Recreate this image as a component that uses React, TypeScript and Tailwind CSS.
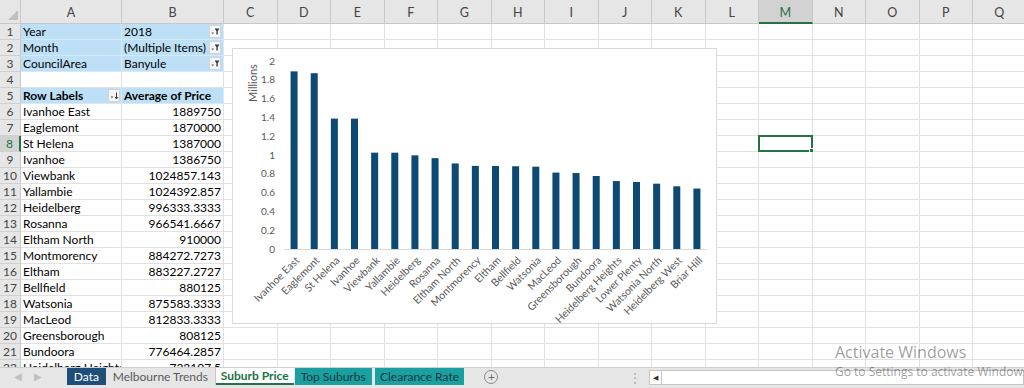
import React from "react";

const letters = ["A", "B", "C", "D", "E", "F", "G", "H", "I", "J", "K", "L", "M", "N", "O", "P", "Q"];

const suburbs: [string, string][] = [
  ["Ivanhoe East", "1889750"],
  ["Eaglemont", "1870000"],
  ["St Helena", "1387000"],
  ["Ivanhoe", "1386750"],
  ["Viewbank", "1024857.143"],
  ["Yallambie", "1024392.857"],
  ["Heidelberg", "996333.3333"],
  ["Rosanna", "966541.6667"],
  ["Eltham North", "910000"],
  ["Montmorency", "884272.7273"],
  ["Eltham", "883227.2727"],
  ["Bellfield", "880125"],
  ["Watsonia", "875583.3333"],
  ["MacLeod", "812833.3333"],
  ["Greensborough", "808125"],
  ["Bundoora", "776464.2857"],
  ["Heidelberg Heights", "723107.5"],
];

const bars: [string, number][] = [
  ["Ivanhoe East", 1.88975],
  ["Eaglemont", 1.87],
  ["St Helena", 1.387],
  ["Ivanhoe", 1.38675],
  ["Viewbank", 1.024857],
  ["Yallambie", 1.024393],
  ["Heidelberg", 0.996333],
  ["Rosanna", 0.966542],
  ["Eltham North", 0.91],
  ["Montmorency", 0.884273],
  ["Eltham", 0.883227],
  ["Bellfield", 0.880125],
  ["Watsonia", 0.875583],
  ["MacLeod", 0.812833],
  ["Greensborough", 0.808125],
  ["Bundoora", 0.776464],
  ["Heidelberg Heights", 0.723],
  ["Lower Plenty", 0.713],
  ["Watsonia North", 0.695],
  ["Heidelberg West", 0.667],
  ["Briar Hill", 0.643],
];

const FilterBtn = () => (
  <span className="absolute right-[2px] top-[1px] flex h-[13px] w-[12px] items-center justify-center border border-[#d3d3d3] bg-[#f6f6f6]">
    <svg width="9" height="7" viewBox="0 0 9 7">
      <path d="M0.5 4.5 L3 4.5 L1.75 6.2Z" fill="#555" />
      <path d="M3.6 0.6 H8.6 L6.8 3 V6.6 H5.4 V3Z" fill="#3c3c3c" />
    </svg>
  </span>
);

const SortBtn = () => (
  <span className="absolute right-[1px] top-[1px] flex h-[13px] w-[12px] items-center justify-center border border-[#d3d3d3] bg-[#f6f6f6]">
    <svg width="9" height="8" viewBox="0 0 9 8">
      <path d="M0.5 4.5 L3.5 4.5 L2 6.3Z" fill="#555" />
      <path d="M6.5 0.5 V6.5 M5 5 L6.5 7 L8 5" stroke="#3c3c3c" strokeWidth="1" fill="none" />
    </svg>
  </span>
);

function Chart() {
  const base = 200;
  const unit = 94;
  const x0 = 51;
  const step = 423 / bars.length;
  const ticks = ["0", "0.2", "0.4", "0.6", "0.8", "1", "1.2", "1.4", "1.6", "1.8", "2"];
  return (
    <div className="absolute left-[232px] top-[48px] h-[276px] w-[485px] border border-[#d9d9d9] bg-white">
      <svg width="485" height="276" className="font-['Lato',sans-serif]">
        <text x="24" y="34" transform="rotate(-90 24 34)" textAnchor="middle" fontSize="11" fill="#595959">
          Millions
        </text>
        {ticks.map((t, i) => (
          <text key={t} x="42" y={base - i * 0.2 * unit + 3.5} textAnchor="end" fontSize="10" fill="#595959">
            {t}
          </text>
        ))}
        <line x1={x0} x2={x0 + 423} y1={base + 0.5} y2={base + 0.5} stroke="#d9d9d9" />
        {bars.map(([name, v], i) => {
          const cx = x0 + step * (i + 0.5);
          const h = v * unit;
          const lx = cx + 6;
          const ly = base + 12;
          return (
            <g key={name}>
              <rect x={cx - 3.5} y={base - h} width="7" height={h} fill="#0d4a73" />
              <text x={lx} y={ly} transform={`rotate(-45 ${lx} ${ly})`} textAnchor="end" fontSize="10.5" fill="#595959">
                {name}
              </text>
            </g>
          );
        })}
      </svg>
    </div>
  );
}

function Sheet() {
  const rows = Array.from({ length: 22 }, (_, i) => i + 1);
  return (
    <div className="grid grid-cols-[21px_101px_102px_repeat(15,53.5px)]">
      <div className="relative h-[24px] border-b border-r border-[#c9c9c9] bg-[#e6e6e6]">
        <svg width="10" height="10" className="absolute bottom-[3px] right-[2px]">
          <path d="M10 0 V10 H0Z" fill="#bfbfbf" />
        </svg>
      </div>
      {letters.map((l) => (
        <div
          key={l}
          className={
            l === "M"
              ? "h-[24px] border-b-2 border-r border-b-[#217346] border-r-[#c9c9c9] bg-[#d2d2d2] pt-[4px] text-center text-[12.5px] text-[#217346]"
              : "h-[24px] border-b border-r border-[#c9c9c9] bg-[#e6e6e6] pt-[4px] text-center text-[12.5px] text-[#444]"
          }
        >
          {l}
        </div>
      ))}
      {rows.map((r) => {
        const blue = r <= 3 || r === 5;
        const data = r >= 6 ? suburbs[r - 6] : null;
        let a: React.ReactNode = null;
        let b: React.ReactNode = null;
        if (r === 1) {
          a = "Year";
          b = "2018";
        } else if (r === 2) {
          a = "Month";
          b = "(Multiple Items)";
        } else if (r === 3) {
          a = "CouncilArea";
          b = "Banyule";
        } else if (r === 5) {
          a = <span className="font-bold">Row Labels</span>;
          b = <span className="font-bold">Average of Price</span>;
        } else if (data) {
          a = data[0];
          b = data[1];
        }
        const cellBase = "relative h-[16px] overflow-hidden whitespace-nowrap border-b border-r text-[12px] leading-[15px] text-black";
        return (
          <React.Fragment key={r}>
            <div
              className={
                r === 8
                  ? "h-[16px] border-b border-r-2 border-b-[#d0d0d0] border-r-[#217346] bg-[#d2d2d2] text-center text-[12px] leading-[15px] text-[#217346]"
                  : "h-[16px] border-b border-r border-b-[#d0d0d0] border-r-[#c9c9c9] bg-[#e6e6e6] text-center text-[12px] leading-[15px] text-[#444]"
              }
            >
              {r}
            </div>
            <div className={`${cellBase} pl-[2px] ${blue ? "border-[#d5e9f6] bg-[#bde0f7]" : "border-[#e1e1e1] bg-white"}`}>
              {a}
              {r === 5 && <SortBtn />}
            </div>
            <div
              className={`${cellBase} ${data ? "pr-[2px] text-right" : "pl-[2px]"} ${blue ? "border-[#d5e9f6] bg-[#bde0f7]" : "border-[#e1e1e1] bg-white"}`}
            >
              {b}
              {r <= 3 && <FilterBtn />}
            </div>
            {letters.slice(2).map((l) => (
              <div key={l} className="relative h-[16px] border-b border-r border-[#e1e1e1] bg-white">
                {l === "M" && r === 8 && (
                  <span className="absolute -left-px -top-px bottom-[-1px] right-[-1px] border-2 border-[#217346]">
                    <span className="absolute -bottom-[3px] -right-[3px] h-[5px] w-[5px] border border-white bg-[#217346]" />
                  </span>
                )}
              </div>
            ))}
          </React.Fragment>
        );
      })}
    </div>
  );
}

function Tabs() {
  return (
    <div className="flex h-[21px] shrink-0 items-start border-t border-[#cfcfcf] bg-[#e6e6e6] text-[12px] leading-[17px]">
      <div className="flex h-[17px] w-[67px] items-center gap-[12px] pl-[14px] text-[10px] text-[#c0c0c0]">
        <span>◀</span>
        <span>▶</span>
      </div>
      <div className="flex h-[17px] w-[39px] items-center justify-center bg-[#1f4e78] text-white">Data</div>
      <div className="flex h-[17px] w-[110px] items-center justify-center border-r border-[#c9c9c9] text-[#5a5a5a]">Melbourne Trends</div>
      <div className="flex h-[17px] w-[78px] items-center justify-center border-b-2 border-[#217346] bg-white font-bold text-[#217346]">
        Suburb Price
      </div>
      <div className="ml-[1px] flex h-[17px] w-[77px] items-center justify-center bg-[#1aa0a0] text-[#12393d]">Top Suburbs</div>
      <div className="ml-[3px] flex h-[17px] w-[90px] items-center justify-center bg-[#1aa0a0] text-[#12393d]">Clearance Rate</div>
      <div className="ml-[20px] mt-[2px] flex h-[14px] w-[14px] items-center justify-center rounded-full border border-[#8a8a8a] text-[12px] leading-none text-[#6a6a6a]">
        +
      </div>
      <div className="ml-[131px] mt-[1px] text-[12px] text-[#a8a8a8]">⋮</div>
      <div className="ml-[8px] mt-[2px] flex h-[15px] w-[375px] items-center border border-[#c6c6c6] bg-white">
        <div className="flex h-full w-[12px] items-center justify-center border-r border-[#c6c6c6] text-[7px] text-[#333]">◀</div>
      </div>
    </div>
  );
}

export default function App() {
  return (
    <div className="relative flex h-[388px] w-[1024px] flex-col overflow-hidden bg-white font-['Lato',sans-serif]">
      <div className="relative h-[367px] overflow-hidden">
        <Sheet />
        <Chart />
      </div>
      <Tabs />
      <div className="pointer-events-none absolute left-[835px] top-[341px] whitespace-nowrap font-['Open_Sans',sans-serif] text-black/40">
        <div className="text-[16px] leading-[22px]">Activate Windows</div>
        <div className="text-[12px] leading-[18px]">Go to Settings to activate Windows.</div>
      </div>
    </div>
  );
}
